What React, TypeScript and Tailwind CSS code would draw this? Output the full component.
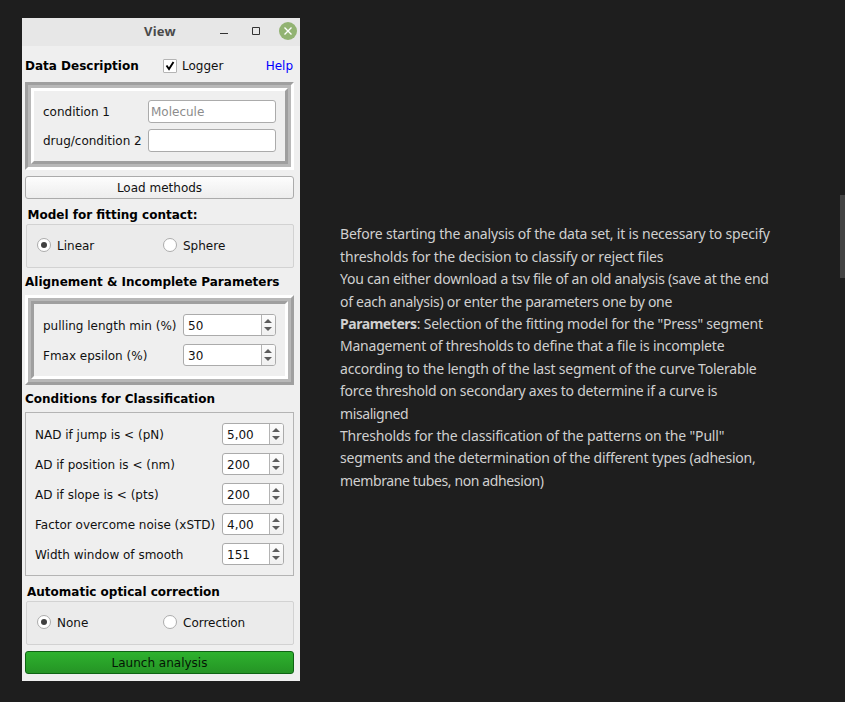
import { ReactNode } from "react";

function SunkenFrame({ children }: { children: ReactNode }) {
  return (
    <div className="h-[88px] border-[3px] border-t-[#9f9f9f] border-l-[#9f9f9f] border-r-white border-b-white">
      <div className="h-full border-[3px] border-[#b8b8b8]">
        <div className="h-full border-[3px] border-t-white border-l-white border-r-[#9f9f9f] border-b-[#9f9f9f]">{children}</div>
      </div>
    </div>
  );
}

function RaisedFrame({ children }: { children: ReactNode }) {
  return (
    <div className="h-[90px] border-[3px] border-t-white border-l-white border-r-[#9f9f9f] border-b-[#9f9f9f]">
      <div className="h-full border-[3px] border-[#b8b8b8]">
        <div className="h-full border-[3px] border-t-[#9f9f9f] border-l-[#9f9f9f] border-r-white border-b-white">{children}</div>
      </div>
    </div>
  );
}

function Spin({ value, wide }: { value: string; wide?: boolean }) {
  return (
    <div className={`flex h-[22px] overflow-hidden rounded-[3px] border border-[#ababab] bg-white ${wide ? "w-[93px]" : "w-[62px]"}`}>
      <div className="flex-1 pl-1 leading-[23px]">{value}</div>
      <div className="flex w-[14px] flex-col items-center justify-center border-l border-[#b4b4b4] bg-linear-to-b from-[#fcfcfc] to-[#f0f0f0]">
        <svg width="8" height="12" viewBox="0 0 8 12" fill="#5c5c5c" className="-ml-px">
          <path d="M0 4 4 0 8 4zM0 8h8L4 12z" />
        </svg>
      </div>
    </div>
  );
}

function Radio({ label, on }: { label: string; on?: boolean }) {
  return (
    <div className="flex h-[14px] w-[126px] items-center gap-[6px]">
      <span className="flex size-[14px] items-center justify-center rounded-full border border-[#acacac] bg-white">
        {on && <span className="size-[6px] rounded-full bg-[#404040]" />}
      </span>
      <span className="pt-[2px] leading-[14px]">{label}</span>
    </div>
  );
}

function RadioGroup({ a, b }: { a: string; b: string }) {
  return (
    <div className="ml-px flex h-[44px] items-center rounded-[2px] border border-[#d2d2d2] bg-[#ebebeb] pb-[2px] pl-[10px]">
      <Radio label={a} on />
      <Radio label={b} />
    </div>
  );
}

const CONDITIONS = [
  ["NAD if jump is < (pN)", "5,00"],
  ["AD if position is < (nm)", "200"],
  ["AD if slope is < (pts)", "200"],
  ["Factor overcome noise (xSTD)", "4,00"],
  ["Width window of smooth", "151"],
];

function Dialog() {
  return (
    <div className="mt-[18px] ml-[22px] h-[663px] w-[278px] shrink-0 bg-[#efefef] font-['DejaVu_Sans',sans-serif] text-[12px] whitespace-nowrap text-[#111]">
      <div className="flex h-[28px] items-center bg-[#e7e7e7]">
        <div className="ml-[122px] w-[75px] font-['Noto_Sans',sans-serif] text-[13px] font-bold tracking-[0.200px] text-[#4a4a4a]">View</div>
        <svg width="81" height="28" viewBox="0 0 81 28" fill="none">
          <path d="M1 15.500h8" stroke="#333" />
          <path d="M33.500 9.500h7v7h-7z" stroke="#333" />
          <circle cx="69" cy="13" r="9" fill="#92b372" />
          <path d="m65.500 9.500 7 7m0-7-7 7" stroke="#fff" strokeWidth="1.400" />
        </svg>
      </div>
      <div className="pr-[6px] pl-[3px]">
        <div className="flex h-[36px] items-center pt-[3px]">
          <div className="w-[138px] font-bold text-black">Data Description</div>
          <div className="flex size-[14px] items-center justify-center rounded-[1px] border border-[#b4b4b4] bg-white">
            <svg width="10" height="10" viewBox="0 0 10 10" fill="none" stroke="#000" strokeWidth="1.900">
              <path d="M1.500 4.500 4 8 8.500 1" />
            </svg>
          </div>
          <div className="ml-[5px]">Logger</div>
          <div className="mr-px ml-auto text-[#0000ff]">Help</div>
        </div>
        <SunkenFrame>
          <div className="flex flex-col gap-[6px] pt-[9px] pr-[9px] pl-[9px]">
            <div className="flex h-[23px] items-center justify-between">
              <span>condition 1</span>
              <div className="h-[23px] w-[128px] rounded-[3px] border border-[#ababab] bg-white pl-[2px] leading-[23px] text-[#8c8c8c]">Molecule</div>
            </div>
            <div className="flex h-[23px] items-center justify-between">
              <span>drug/condition 2</span>
              <div className="h-[23px] w-[128px] rounded-[3px] border border-[#ababab] bg-white" />
            </div>
          </div>
        </SunkenFrame>
        <div className="mt-[6px] h-[23px] rounded-[3px] border border-[#ababab] bg-linear-to-b from-[#fdfdfd] to-[#ededed] text-center leading-[23px]">Load methods</div>
        <div className="h-[25px] pt-[7px] pl-[2.500px] leading-[18px] font-bold text-black">Model for fitting contact:</div>
        <RadioGroup a="Linear" b="Sphere" />
        <div className="h-[27px] pt-[5px] leading-[18px] font-bold text-black">Alignement &amp; Incomplete Parameters</div>
        <RaisedFrame>
          <div className="flex flex-col gap-2 pt-[10px] pr-[9px] pl-[9px]">
            <div className="flex h-[22px] items-center justify-between"><span className="pt-[2px]">pulling length min (%)</span><Spin wide value="50" /></div>
            <div className="flex h-[22px] items-center justify-between"><span className="pt-[2px]">Fmax epsilon (%)</span><Spin wide value="30" /></div>
          </div>
        </RaisedFrame>
        <div className="h-[27px] pt-[5px] leading-[18px] font-bold text-black">Conditions for Classification</div>
        <div className="flex h-[164px] flex-col gap-2 border border-[#b4b4b4] px-[9px] pt-[10px]">
          {CONDITIONS.map(([label, value]) => (
            <div key={label} className="flex h-[22px] items-center justify-between">
              <span className="pt-[2px]">{label}</span>
              <Spin value={value} />
            </div>
          ))}
        </div>
        <div className="h-[25px] pt-[7px] pl-[2px] leading-[18px] font-bold text-black">Automatic optical correction</div>
        <RadioGroup a="None" b="Correction" />
        <div className="mt-[6px] h-[23px] rounded-[3px] border border-[#0f6414] bg-linear-to-b from-[#2eb22e] to-[#259425] text-center leading-[23px] text-[#051505]">Launch analysis</div>
      </div>
    </div>
  );
}

function Notes() {
  return (
    <div className="mt-[223.400px] ml-[40px] w-[460px] font-['Noto_Sans',sans-serif] text-[14px] leading-[22.400px] whitespace-nowrap text-[#d0d0d0]">
      <div className="tracking-[-0.190px]">Before starting the analysis of the data set, it is necessary to specify</div>
      <div className="tracking-[-0.160px]">thresholds for the decision to classify or reject files</div>
      <div className="tracking-[-0.235px]">You can either download a tsv file of an old analysis (save at the end</div>
      <div className="tracking-[-0.275px]">of each analysis) or enter the parameters one by one</div>
      <div className="tracking-[-0.200px]"><b className="tracking-[-0.450px]">Parameters</b>: Selection of the fitting model for the "Press" segment</div>
      <div className="tracking-[-0.220px]">Management of thresholds to define that a file is incomplete</div>
      <div className="tracking-[-0.200px]">according to the length of the last segment of the curve Tolerable</div>
      <div className="tracking-[-0.250px]">force threshold on secondary axes to determine if a curve is</div>
      <div className="tracking-[-0.400px]">misaligned</div>
      <div className="tracking-[-0.170px]">Thresholds for the classification of the patterns on the "Pull"</div>
      <div className="tracking-[-0.230px]">segments and the determination of the different types (adhesion,</div>
      <div className="tracking-[-0.380px]">membrane tubes, non adhesion)</div>
    </div>
  );
}

export default function App() {
  return (
    <div className="flex h-[702px] w-[845px] overflow-hidden bg-[#1e1e1e]">
      <Dialog />
      <Notes />
      <div className="mt-[195px] ml-auto h-[83px] w-[5px] bg-[#434343]" />
    </div>
  );
}
